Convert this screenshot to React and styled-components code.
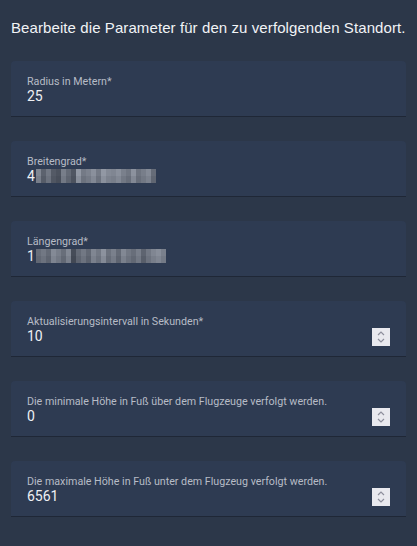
import React from "react";
import styled, { createGlobalStyle } from "styled-components";

const Global = createGlobalStyle`
  html, body {
    margin: 0;
    background: #2c3749;
  }
  body {
    font-family: Roboto, "Liberation Sans", sans-serif;
  }
`;

const Page = styled.div`
  width: 417px;
  min-height: 546px;
  box-sizing: border-box;
  padding: 19px 11px 0 11px;
  background: #2c3749;
`;

const Title = styled.div`
  font-family: "Liberation Sans", Arial, sans-serif;
  font-size: 15px;
  line-height: 18px;
  letter-spacing: 0.09px;
  color: #f1f3f6;
  white-space: nowrap;
  margin-bottom: 24px;
`;

const Fields = styled.div`
  display: flex;
  flex-direction: column;
  gap: 24px;
`;

const Field = styled.div`
  height: 56px;
  box-sizing: border-box;
  padding: 13.5px 16px 0 16px;
  background: #2e3b52;
  border-radius: 4px 4px 0 0;
  border-bottom: 1px solid #1f2736;
`;

const Label = styled.div`
  font-size: 10.7px;
  line-height: 13px;
  color: #b7bcc6;
  white-space: nowrap;
`;

const ValueRow = styled.div`
  display: flex;
  align-items: flex-start;
  justify-content: space-between;
  height: 16px;
`;

const Value = styled.div`
  display: flex;
  align-items: center;
  font-size: 14px;
  line-height: 16px;
  color: #eef0f4;
`;

const Spinner = styled.div`
  width: 18px;
  height: 18px;
  background: #e9e9ee;
  display: flex;
  align-items: center;
  justify-content: center;
`;

const Mosaic = styled.svg`
  display: block;
  margin-left: 1px;
`;

function Blur({ cells }) {
  const w = 5;
  const h = 7;
  return (
    <Mosaic width={cells[0].length * w} height={h * 2}>
      {cells.map((row, r) =>
        row.map((v, c) => (
          <rect
            key={r + "-" + c}
            x={c * w}
            y={r * h}
            width={w}
            height={h}
            fill={`rgb(${v},${v + 6},${v + 18})`}
          />
        ))
      )}
    </Mosaic>
  );
}

const latCells = [
  [128, 92, 114, 84, 76, 120, 100, 80, 146, 116, 124, 138, 116, 146, 132, 128, 138, 122, 112, 140, 110, 120, 132, 102],
  [120, 86, 108, 80, 72, 114, 94, 76, 136, 108, 116, 130, 108, 138, 124, 120, 130, 114, 104, 130, 104, 114, 124, 96],
];

const lonCells = [
  [104, 114, 100, 132, 120, 104, 130, 70, 100, 114, 98, 128, 114, 140, 108, 122, 100, 130, 114, 104, 120, 94, 114, 128, 136, 122],
  [98, 108, 94, 126, 114, 98, 122, 66, 94, 108, 92, 122, 108, 132, 102, 116, 94, 122, 108, 98, 114, 88, 108, 120, 128, 116],
];

function Chevrons() {
  return (
    <svg width="10" height="14" viewBox="0 0 10 14">
      <path d="M2 5 L5 2 L8 5" fill="none" stroke="#8e8f9c" strokeWidth="1.2" />
      <path d="M2 9 L5 12 L8 9" fill="none" stroke="#8e8f9c" strokeWidth="1.2" />
    </svg>
  );
}

const fields = [
  { label: "Radius in Metern*", value: "25" },
  { label: "Breitengrad*", value: "4", blur: latCells },
  { label: "Längengrad*", value: "1", blur: lonCells },
  { label: "Aktualisierungsintervall in Sekunden*", value: "10", spin: true },
  { label: "Die minimale Höhe in Fuß über dem Flugzeuge verfolgt werden.", value: "0", spin: true },
  { label: "Die maximale Höhe in Fuß unter dem Flugzeug verfolgt werden.", value: "6561", spin: true },
];

export default function App() {
  return (
    <Page>
      <Global />
      <Title>Bearbeite die Parameter für den zu verfolgenden Standort.</Title>
      <Fields>
        {fields.map((f, i) => (
          <Field key={i}>
            <Label>{f.label}</Label>
            <ValueRow>
              <Value>
                {f.value}
                {f.blur && <Blur cells={f.blur} />}
              </Value>
              {f.spin && (
                <Spinner>
                  <Chevrons />
                </Spinner>
              )}
            </ValueRow>
          </Field>
        ))}
      </Fields>
    </Page>
  );
}
